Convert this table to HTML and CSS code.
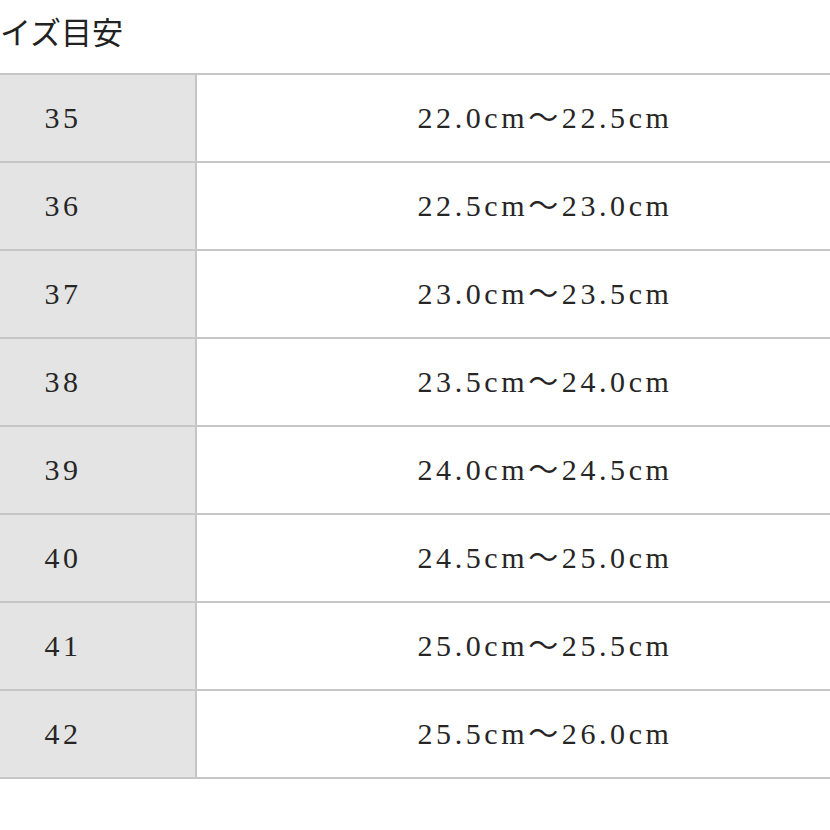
FILE: index.html
```html
<!DOCTYPE html>
<html lang="ja">
<head>
<meta charset="utf-8">
<link rel="stylesheet" href="styles.css">
</head>
<body>
<div class="page">
  <h2 class="title">イズ目安</h2>
  <div class="table-wrap">
    <table class="size-table">
      <tr><td class="size">35</td><td class="range">22.0cm～22.5cm</td></tr>
      <tr><td class="size">36</td><td class="range">22.5cm～23.0cm</td></tr>
      <tr><td class="size">37</td><td class="range">23.0cm～23.5cm</td></tr>
      <tr><td class="size">38</td><td class="range">23.5cm～24.0cm</td></tr>
      <tr><td class="size">39</td><td class="range">24.0cm～24.5cm</td></tr>
      <tr><td class="size">40</td><td class="range">24.5cm～25.0cm</td></tr>
      <tr><td class="size">41</td><td class="range">25.0cm～25.5cm</td></tr>
      <tr><td class="size">42</td><td class="range">25.5cm～26.0cm</td></tr>
    </table>
  </div>
</div>
</body>
</html>
```
FILE: styles.css
```css
html, body {
  margin: 0;
  padding: 0;
  background: #ffffff;
  overflow: hidden;
}
.page {
  width: 830px;
  height: 830px;
  overflow: hidden;
}
.title {
  margin: 0;
  padding-top: 11px;
  height: 73px;
  box-sizing: border-box;
  font-family: "Noto Sans CJK JP", sans-serif;
  font-weight: 400;
  font-size: 31px;
  line-height: 40px;
  color: #222222;
}
.table-wrap {
  margin-left: -71px;
  width: 966px;
}
.size-table {
  width: 966px;
  border-collapse: collapse;
  font-family: "Liberation Serif", "Noto Sans CJK JP", serif;
  font-size: 30px;
  line-height: 30px;
  letter-spacing: 3.6px;
  color: #262626;
}
.size-table td {
  height: 86px;
  padding: 0;
  border: 2px solid #c6c6c6;
  text-align: center;
  vertical-align: middle;
}
.size-table .size {
  width: 264px;
  background: #e4e4e4;
}
.size-table .range {
  background: #ffffff;
}
```
